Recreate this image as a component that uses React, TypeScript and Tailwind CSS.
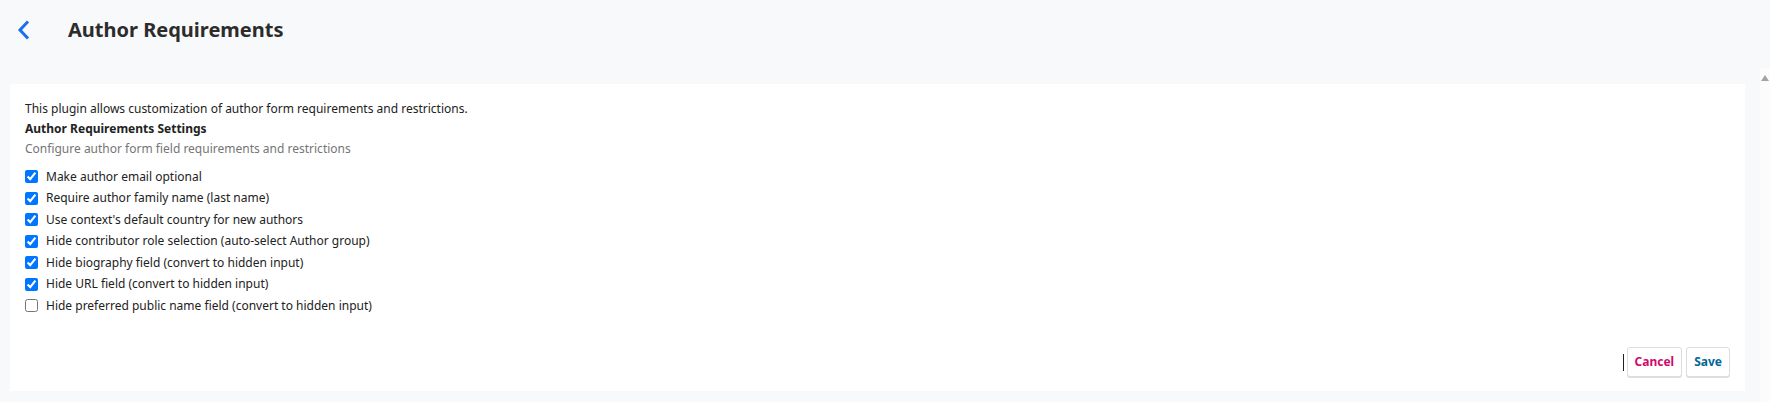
import { useState } from 'react';

const fields = [
  { id: 'emailOptional', label: 'Make author email optional', on: true },
  { id: 'requireFamily', label: 'Require author family name (last name)', on: true },
  { id: 'defaultCountry', label: "Use context's default country for new authors", on: true },
  { id: 'hideRole', label: 'Hide contributor role selection (auto-select Author group)', on: true },
  { id: 'hideBio', label: 'Hide biography field (convert to hidden input)', on: true },
  { id: 'hideUrl', label: 'Hide URL field (convert to hidden input)', on: true },
  { id: 'hidePreferred', label: 'Hide preferred public name field (convert to hidden input)', on: false },
];

export default function App() {
  const [values, setValues] = useState<Record<string, boolean>>(
    Object.fromEntries(fields.map((f) => [f.id, f.on]))
  );

  const toggle = (id: string) => setValues((v) => ({ ...v, [id]: !v[id] }));

  return (
    <div className="w-[1770px] h-[402px] bg-[#f8f9fa] flex font-['Noto_Sans',sans-serif] text-[#222] overflow-hidden">
      <div className="flex-1 flex flex-col">
        {/* header */}
        <div className="h-[84px] flex items-start pt-[12px]">
          <button className="w-[30px] h-[36px] ml-[8px] flex items-center justify-center text-[#1a6ff0]">
            <svg width="14" height="20" viewBox="0 0 14 20" fill="none">
              <path d="M11 2.5 L4 10 L11 17.5" stroke="currentColor" strokeWidth="3" strokeLinecap="square" />
            </svg>
          </button>
          <h1 className="ml-[30px] mt-[2px] text-[20px] leading-[32px] font-bold text-[#2c2c2c]">Author Requirements</h1>
        </div>

        {/* card */}
        <div className="ml-[10px] mr-[15px] mb-[11px] flex-1 bg-white px-[15px] pt-[15px] pb-[14px] flex flex-col">
          <p className="text-[12px] leading-[20px]">This plugin allows customization of author form requirements and restrictions.</p>
          <p className="text-[12px] leading-[19px] font-bold">Author Requirements Settings</p>
          <p className="text-[12px] leading-[22px] text-[#757575]">Configure author form field requirements and restrictions</p>

          <div className="mt-[6px] flex flex-col">
            {fields.map((f) => (
              <label key={f.id} className="flex items-center h-[21.5px] text-[12px] cursor-pointer">
                <input
                  type="checkbox"
                  checked={values[f.id]}
                  onChange={() => toggle(f.id)}
                  className="w-[13px] h-[13px] m-0 accent-[#0075ff]"
                />
                <span className="ml-[8px]">{f.label}</span>
              </label>
            ))}
          </div>

          <div className="mt-auto flex justify-end items-center gap-[4px]">
            <span className="w-[1px] h-[17px] bg-[#222] -mr-[1px]" />
            <button className="h-[30px] px-[7px] border border-[#ddd] rounded-[3px] shadow-[0_1px_0_#ddd] bg-white text-[12px] font-bold text-[#d00a6c]">
              Cancel
            </button>
            <button className="h-[30px] px-[7px] border border-[#ddd] rounded-[3px] shadow-[0_1px_0_#ddd] bg-white text-[12px] font-bold text-[#006798]">
              Save
            </button>
          </div>
        </div>
      </div>

      {/* scrollbar */}
      <div className="w-[10px] mt-[68px] bg-[#fcfcfc] flex justify-center pt-[7px]">
        <svg width="8" height="6" viewBox="0 0 8 6">
          <path d="M4 0 L8 6 L0 6 Z" fill="#a3a3a3" />
        </svg>
      </div>
    </div>
  );
}
